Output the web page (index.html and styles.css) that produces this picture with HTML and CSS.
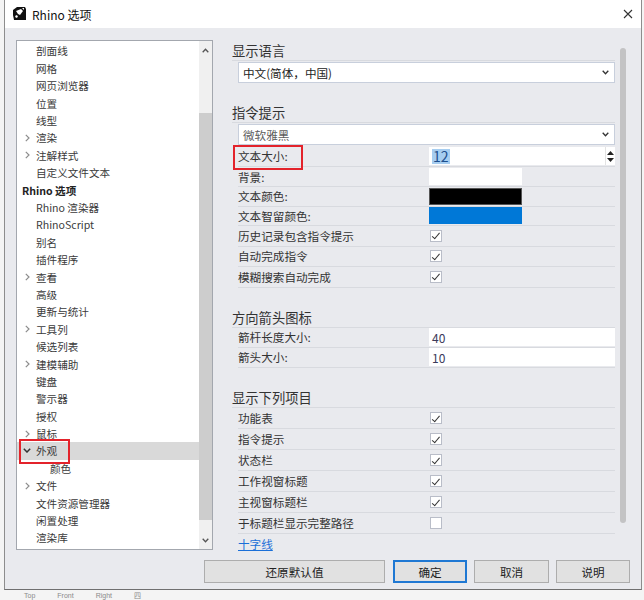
FILE: index.html
```html
<!DOCTYPE html>
<html lang="zh-CN">
<head>
<meta charset="utf-8">
<title>Rhino 选项</title>
<link rel="stylesheet" href="styles.css">
</head>
<body>
<div class="desk">
  <div class="dialog">
    <div class="titlebar">
      <svg class="app-icon" width="15" height="15" viewBox="0 0 15 15">
        <path d="M1 4 L5 1 L13 1 L14 3 L14 14 L2 14 L1 9 Z" fill="#111"/>
        <path d="M4 5 L9 3 L11 5 L8 9 L6 8 Z" fill="#fff"/>
        <path d="M10 2 L12 2 L12 4 Z" fill="#fff"/>
        <path d="M3 10 L5 9 L6 11 L4 12 Z" fill="#fff"/>
      </svg>
      <span class="title">Rhino 选项</span>
      <svg class="close" width="10" height="10" viewBox="0 0 10 10">
        <path d="M1 1 L9 9 M9 1 L1 9" stroke="#333" stroke-width="1.1" fill="none"/>
      </svg>
    </div>

    <div class="dialog-body">
      <div class="main">
        <div class="tree">
          <div class="tree-list">
            <div class="node"><span class="twisty"></span>剖面线</div>
            <div class="node"><span class="twisty"></span>网格</div>
            <div class="node"><span class="twisty"></span>网页浏览器</div>
            <div class="node"><span class="twisty"></span>位置</div>
            <div class="node"><span class="twisty"></span>线型</div>
            <div class="node"><span class="twisty"><svg width="5" height="8" viewBox="0 0 5 8"><path d="M0.8 0.8 L4 4 L0.8 7.2" stroke="#8c8c8c" stroke-width="1.2" fill="none"/></svg></span>渲染</div>
            <div class="node"><span class="twisty"><svg width="5" height="8" viewBox="0 0 5 8"><path d="M0.8 0.8 L4 4 L0.8 7.2" stroke="#8c8c8c" stroke-width="1.2" fill="none"/></svg></span>注解样式</div>
            <div class="node"><span class="twisty"></span>自定义文件文本</div>
            <div class="node root">Rhino 选项</div>
            <div class="node"><span class="twisty"></span>Rhino 渲染器</div>
            <div class="node"><span class="twisty"></span>RhinoScript</div>
            <div class="node"><span class="twisty"></span>别名</div>
            <div class="node"><span class="twisty"></span>插件程序</div>
            <div class="node"><span class="twisty"><svg width="5" height="8" viewBox="0 0 5 8"><path d="M0.8 0.8 L4 4 L0.8 7.2" stroke="#8c8c8c" stroke-width="1.2" fill="none"/></svg></span>查看</div>
            <div class="node"><span class="twisty"></span>高级</div>
            <div class="node"><span class="twisty"></span>更新与统计</div>
            <div class="node"><span class="twisty"><svg width="5" height="8" viewBox="0 0 5 8"><path d="M0.8 0.8 L4 4 L0.8 7.2" stroke="#8c8c8c" stroke-width="1.2" fill="none"/></svg></span>工具列</div>
            <div class="node"><span class="twisty"></span>候选列表</div>
            <div class="node"><span class="twisty"><svg width="5" height="8" viewBox="0 0 5 8"><path d="M0.8 0.8 L4 4 L0.8 7.2" stroke="#8c8c8c" stroke-width="1.2" fill="none"/></svg></span>建模辅助</div>
            <div class="node"><span class="twisty"></span>键盘</div>
            <div class="node"><span class="twisty"></span>警示器</div>
            <div class="node"><span class="twisty"></span>授权</div>
            <div class="node"><span class="twisty"><svg width="5" height="8" viewBox="0 0 5 8"><path d="M0.8 0.8 L4 4 L0.8 7.2" stroke="#8c8c8c" stroke-width="1.2" fill="none"/></svg></span>鼠标</div>
            <div class="node selected"><span class="twisty open"><svg width="8" height="5" viewBox="0 0 8 5"><path d="M0.8 0.8 L4 4 L7.2 0.8" stroke="#333" stroke-width="1.5" fill="none"/></svg></span>外观<span class="mark mark-tree"></span></div>
            <div class="node child"><span class="twisty"></span>颜色</div>
            <div class="node"><span class="twisty"><svg width="5" height="8" viewBox="0 0 5 8"><path d="M0.8 0.8 L4 4 L0.8 7.2" stroke="#8c8c8c" stroke-width="1.2" fill="none"/></svg></span>文件</div>
            <div class="node"><span class="twisty"></span>文件资源管理器</div>
            <div class="node"><span class="twisty"></span>闲置处理</div>
            <div class="node"><span class="twisty"></span>渲染库</div>
          </div>
          <div class="vscroll">
            <div class="vs-btn"><svg width="7" height="5" viewBox="0 0 7 5"><path d="M0.7 4.2 L3.5 1.2 L6.3 4.2" stroke="#555" stroke-width="1.3" fill="none"/></svg></div>
            <div class="vs-track"><div class="vs-thumb"></div></div>
            <div class="vs-btn"><svg width="7" height="5" viewBox="0 0 7 5"><path d="M0.7 0.8 L3.5 3.8 L6.3 0.8" stroke="#555" stroke-width="1.3" fill="none"/></svg></div>
          </div>
        </div>

        <div class="pane">
          <div class="pane-content">
            <div class="group-head first">显示语言</div>
            <div class="select">中文(简体，中国)<svg class="sel-chev" width="7" height="5" viewBox="0 0 7 5"><path d="M0.7 0.8 L3.5 3.8 L6.3 0.8" stroke="#333" stroke-width="1.3" fill="none"/></svg></div>

            <div class="group-head">指令提示</div>
            <div class="select dim">微软雅黑<svg class="sel-chev" width="7" height="5" viewBox="0 0 7 5"><path d="M0.7 0.8 L3.5 3.8 L6.3 0.8" stroke="#333" stroke-width="1.3" fill="none"/></svg></div>
            <div class="row r22"><span class="label">文本大小:</span><span class="spin"><span class="spin-text"><span class="hl">12</span></span><span class="spin-btns"><svg width="7" height="4" viewBox="0 0 7 4"><path d="M0 4 L3.5 0 L7 4 Z" fill="#222"/></svg><svg width="7" height="4" viewBox="0 0 7 4"><path d="M0 0 L3.5 4 L7 0 Z" fill="#222"/></svg></span></span><span class="mark mark-label"></span></div>
            <div class="row r20"><span class="label">背景:</span><span class="swatch white"></span></div>
            <div class="row r195"><span class="label">文本颜色:</span><span class="swatch black"></span></div>
            <div class="row r195"><span class="label">文本智留颜色:</span><span class="swatch blue"></span></div>
            <div class="row r205"><span class="label">历史记录包含指令提示</span><span class="check on"></span></div>
            <div class="row r205"><span class="label">自动完成指令</span><span class="check on"></span></div>
            <div class="row r205"><span class="label">模糊搜索自动完成</span><span class="check on"></span></div>

            <div class="group-head">方向箭头图标</div>
            <div class="row r20"><span class="label">箭杆长度大小:</span><span class="field">40</span></div>
            <div class="row r205"><span class="label">箭头大小:</span><span class="field">10</span></div>

            <div class="group-head">显示下列项目</div>
            <div class="row r21"><span class="label">功能表</span><span class="check on"></span></div>
            <div class="row r21"><span class="label">指令提示</span><span class="check on"></span></div>
            <div class="row r21"><span class="label">状态栏</span><span class="check on"></span></div>
            <div class="row r21"><span class="label">工作视窗标题</span><span class="check on"></span></div>
            <div class="row r21"><span class="label">主视窗标题栏</span><span class="check on"></span></div>
            <div class="row r21"><span class="label">于标题栏显示完整路径</span><span class="check"></span></div>
            <div class="row link-row"><a class="link">十字线</a></div>
          </div>
          <div class="pane-scroll"></div>
        </div>
      </div>

      <div class="buttons">
        <span class="btn wide">还原默认值</span>
        <span class="btn default">确定</span>
        <span class="btn mid">取消</span>
        <span class="btn">说明</span>
      </div>
    </div>
  </div>
  <div class="under">
    <span>Top</span><span>Front</span><span>Right</span><span>四</span>
  </div>
</div>
</body>
</html>
```

FILE: styles.css
```css
* { box-sizing: border-box; }

html, body {
  margin: 0;
  padding: 0;
}

body {
  width: 644px;
  height: 600px;
  overflow: hidden;
  background: #f4f4f4;
  font-family: "Noto Sans CJK SC", "Noto Sans", sans-serif;
  color: #333;
}

.desk {
  display: flex;
  flex-direction: column;
  height: 600px;
  padding-left: 4px;
}

/* ---------- dialog frame ---------- */
.dialog {
  width: 638px;
  height: 590px;
  border-left: 1px solid #8d8d8d;
  border-right: 1px solid #8d8d8d;
  border-bottom: 1px solid #6f6f6f;
  display: flex;
  flex-direction: column;
  flex: none;
}

.titlebar {
  height: 28px;
  background: #fff;
  display: flex;
  align-items: center;
  padding: 0 8px 0 7px;
  flex: none;
}

.app-icon { flex: none; margin-top: -1px; }

.title {
  margin-left: 5px;
  font-size: 12px;
  color: #111;
  flex: 1;
}

.close { flex: none; }

.dialog-body {
  flex: 1;
  background: #e9eaee;
  padding: 12px 0 0 11px;
}

.main {
  display: grid;
  grid-template-columns: 197px 1fr;
  height: 510px;
}

/* ---------- tree ---------- */
.tree {
  background: #fff;
  border: 1px solid #a3a7ae;
  display: flex;
  height: 510px;
}

.tree-list {
  flex: 1;
  padding-top: 1.3px;
  font-size: 10.6px;
  color: #3a3a3a;
}

.node {
  position: relative;
  height: 17.4px;
  display: flex;
  align-items: center;
  padding-left: 7px;
  white-space: nowrap;
}

.twisty {
  width: 12px;
  flex: none;
  display: flex;
  align-items: center;
  padding-left: 1px;
}

.twisty.open { padding-left: 0; margin-left: -1px; width: 13px; }

.node.root {
  padding-left: 5px;
  font-weight: bold;
  color: #222;
}

.node.child { padding-left: 21px; }

.node.selected { background: #d9d9d9; }

.vscroll {
  width: 13px;
  flex: none;
  background: #f0f0f0;
  display: flex;
  flex-direction: column;
}

.vs-btn {
  height: 18px;
  display: flex;
  align-items: center;
  justify-content: center;
  flex: none;
}

.vs-track { flex: 1; }

.vs-thumb {
  margin: 54px 0 0 0;
  height: 407px;
  background: #cdcdcd;
}

/* red annotation frames */
.mark {
  position: absolute;
  border: 2px solid #e3232b;
  pointer-events: none;
}

.mark-tree {
  left: 2px;
  top: -3.6px;
  width: 51px;
  height: 25px;
}

.mark-label {
  left: -5px;
  top: 0px;
  width: 70px;
  height: 25px;
}

/* ---------- option pane ---------- */
.pane {
  display: flex;
  padding: 2px 0 0 19px;
}

.pane-content {
  width: 383px;
  flex: none;
}

.pane-scroll {
  width: 6px;
  height: 475px;
  margin: 6px 0 0 5px;
  background: #c3c3c4;
  border-radius: 3px;
}

.group-head {
  height: 19px;
  line-height: 18px;
  margin-top: 21px;
  font-size: 13.3px;
  color: #333;
  border-bottom: 1px solid #d8dadf;
}

.group-head.first { margin-top: 0; }

.select {
  margin: 1px 0 0 6px;
  height: 21px;
  background: #fff;
  border: 1px solid #c8cfdc;
  display: flex;
  align-items: center;
  padding-left: 4px;
  font-size: 11.6px;
  color: #222;
}

.select.dim { color: #5c5c5c; }

.sel-chev { margin-left: auto; margin-right: 5px; }

.row {
  position: relative;
  margin-left: 6px;
  display: grid;
  grid-template-columns: 191px 1fr;
  align-items: center;
  border-bottom: 1px solid #d8dadf;
  font-size: 11.6px;
  color: #333;
}

.r20 { height: 20px; }
.r21 { height: 21px; }
.r22 { height: 22px; }
.r195 { height: 19.5px; }
.r205 { height: 20.5px; }

.label { white-space: nowrap; }

.spin {
  display: flex;
  height: 18px;
  margin-top: 1px;
}

.spin-text {
  flex: 1;
  background: #fff;
  display: flex;
  align-items: center;
  padding-left: 3px;
}

.hl {
  background: #a6cdf0;
  color: #1d4f8e;
  font-size: 14px;
  line-height: 15px;
  padding: 0 1px;
}

.spin-btns {
  width: 10px;
  background: #fff;
  border-left: 1px solid #e3e3e3;
  display: flex;
  flex-direction: column;
  align-items: center;
  justify-content: space-around;
  padding: 2px 0;
}

.swatch {
  width: 93px;
  height: 17px;
}

.swatch.white { background: #fff; }
.swatch.black { background: #000; border: 1px solid #555; }
.swatch.blue { background: #0078d7; }

.check {
  width: 12px;
  height: 12px;
  margin-left: 1px;
  background: #fff;
  border: 1px solid #b9bdc8;
  position: relative;
}

.check.on::after {
  content: "";
  position: absolute;
  left: 3.2px;
  top: 0.6px;
  width: 3px;
  height: 6.5px;
  border-right: 1.6px solid #333;
  border-bottom: 1.6px solid #333;
  transform: rotate(40deg);
}

.field {
  height: 18px;
  background: #fff;
  display: flex;
  align-items: center;
  padding-left: 3px;
  color: #3a3a5a;
  font-size: 12px;
}

.link-row {
  height: 20px;
  border-bottom: none;
  display: flex;
}

.link {
  color: #1a6fd8;
  text-decoration: underline;
  font-size: 11.6px;
}

/* ---------- command buttons ---------- */
.buttons {
  margin-top: 10px;
  display: flex;
  justify-content: flex-end;
  padding-right: 11px;
  gap: 7px;
}

.btn {
  width: 74px;
  height: 23px;
  background: #e1e1e1;
  border: 1px solid #adadad;
  display: flex;
  align-items: center;
  justify-content: center;
  font-size: 11.6px;
  color: #222;
}

.btn.wide { width: 181px; margin-right: 1px; }
.btn.mid { width: 75px; }
.btn.default { border: 2px solid #1f78d3; }

/* ---------- desktop strip below the dialog ---------- */
.under {
  flex: 1;
  overflow: hidden;
  display: flex;
  align-items: center;
  gap: 22px;
  padding-left: 20px;
  font-family: "Liberation Sans", sans-serif;
  font-size: 7px;
  line-height: 9px;
  color: #8a8a8a;
}
```
